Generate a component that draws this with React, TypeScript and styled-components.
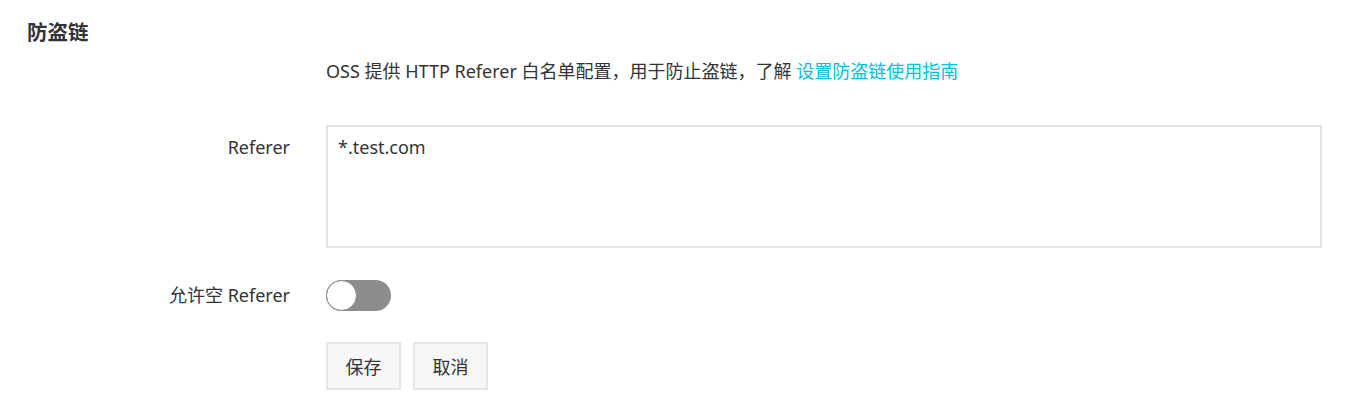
import { Component } from "react";
import styled, { createGlobalStyle } from "styled-components";

const GlobalStyle = createGlobalStyle`
    html, body
    {
        margin: 0;
        padding: 0;
        background: #ffffff;
    }

    body
    {
        font-family: "Noto Sans", "Noto Sans CJK SC", sans-serif;
        font-size: 18px;
        color: #333333;
    }
`;

interface IAppState
{
    referer : string
    allowEmpty : boolean
}

class App extends Component<{}, IAppState>
{
    constructor(props : {})
    {
        super(props);
        this.state =
        {
            referer: "*.test.com",
            allowEmpty: false
        }
    }

    render() : JSX.Element
    {
        const { referer, allowEmpty } = this.state;

        return (
            <Page>
                <GlobalStyle/>
                <Title>防盗链</Title>

                <Row $spacing={41}>
                    <Label/>
                    <Description>
                        OSS 提供 HTTP Referer 白名单配置，用于防止盗链，了解 <Link href="#">设置防盗链使用指南</Link>
                    </Description>
                </Row>

                <Row $spacing={32}>
                    <Label $top={10}>Referer</Label>
                    <TextArea
                        value={referer}
                        onChange={e => this.setState({ referer: e.target.value })}
                    />
                </Row>

                <Row $spacing={30} $center>
                    <Label>允许空 Referer</Label>
                    <Switch
                        $on={allowEmpty}
                        onClick={() => this.setState({ allowEmpty: !allowEmpty })}
                    >
                        <Knob $on={allowEmpty}/>
                    </Switch>
                </Row>

                <Row $spacing={0}>
                    <Label/>
                    <Actions>
                        <Button>保存</Button>
                        <Button>取消</Button>
                    </Actions>
                </Row>
            </Page>
        );
    }
}

const Page = styled.div`
    padding: 18px 27px 0 27px;
`;

const Title = styled.h2`
    margin: 0 0 13px 0;
    font-size: 20.5px;
    line-height: 28px;
    font-weight: 700;
    color: #333333;
`;

const Row = styled.div<{ $spacing : number, $center? : boolean }>`
    display: grid;
    grid-template-columns: 263px 1fr;
    column-gap: 36px;
    align-items: ${props => props.$center ? "center" : "start"};
    margin-bottom: ${props => props.$spacing}px;
`;

const Label = styled.div<{ $top? : number }>`
    text-align: right;
    line-height: 25px;
    padding-top: ${props => props.$top || 0}px;
`;

const Description = styled.div`
    line-height: 25px;
`;

const Link = styled.a`
    color: #00c1de;
    text-decoration: none;
`;

const TextArea = styled.textarea`
    box-sizing: border-box;
    width: 996px;
    height: 123px;
    margin: 0;
    padding: 8px 10px;
    border: 2px solid #e3e3e3;
    outline: none;
    resize: none;
    font-family: inherit;
    font-size: 18px;
    line-height: 25px;
    color: #333333;
`;

const Switch = styled.div<{ $on : boolean }>`
    position: relative;
    width: 65px;
    height: 31px;
    border-radius: 16px;
    background: ${props => props.$on ? "#00c1de" : "#8c8c8c"};
    cursor: pointer;
`;

const Knob = styled.span<{ $on : boolean }>`
    position: absolute;
    top: 0;
    left: ${props => props.$on ? "34px" : "0"};
    box-sizing: border-box;
    width: 31px;
    height: 31px;
    border-radius: 50%;
    background: #ffffff;
    border: 1.5px solid #8c8c8c;
`;

const Actions = styled.div`
    display: flex;
    gap: 12px;
    padding-top: 1px;
`;

const Button = styled.button`
    box-sizing: border-box;
    width: 75px;
    height: 48px;
    padding: 0;
    border: 2px solid #e6e6e6;
    background: #f7f7f7;
    font-family: inherit;
    font-size: 18px;
    color: #333333;
    cursor: pointer;
`;

export default App;
